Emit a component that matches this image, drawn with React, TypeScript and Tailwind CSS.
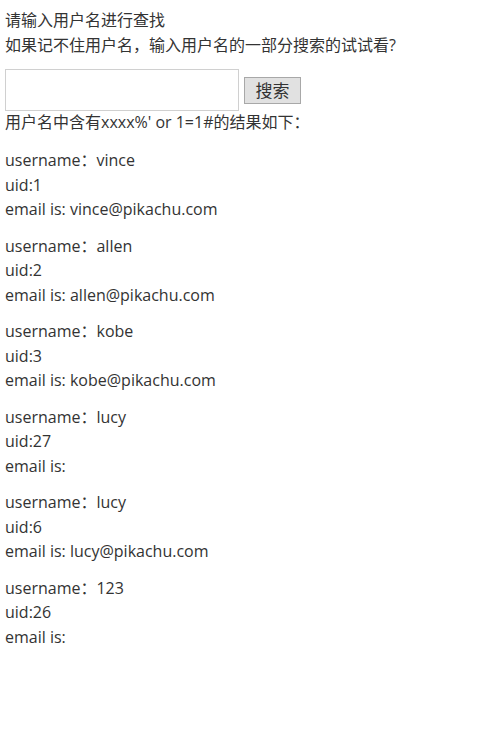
const rows = [
  { name: 'vince', uid: '1', email: 'vince@pikachu.com' },
  { name: 'allen', uid: '2', email: 'allen@pikachu.com' },
  { name: 'kobe', uid: '3', email: 'kobe@pikachu.com' },
  { name: 'lucy', uid: '27', email: '' },
  { name: 'lucy', uid: '6', email: 'lucy@pikachu.com' },
  { name: '123', uid: '26', email: '' },
]

export default function App() {
  return (
    <div
      className="min-h-screen bg-white px-[5px] pt-[8px] text-[16px] leading-[25px] text-[#333]"
      style={{ fontFamily: '"Open Sans", "Noto Sans CJK SC", sans-serif' }}
    >
      <p>请输入用户名进行查找</p>
      <p>如果记不住用户名，输入用户名的一部分搜索的试试看?</p>
      <div className="mt-[11px] flex items-center gap-[5px]">
        <input type="text" className="h-[42px] w-[234px] border border-[#d0d0d0] bg-white outline-none" />
        <button className="mt-[1px] h-[27px] w-[57px] border border-[#a8a8a8] bg-[#e1e1e1] text-[17px] leading-none text-[#333]">
          搜索
        </button>
      </div>
      <p className="-mt-[1px]">用户名中含有xxxx%' or 1=1#的结果如下：</p>
      <div className="mt-[13px]">
        {rows.map((r, i) => (
          <div key={i} className="mb-[12px] leading-[24.5px]">
            <p>username：{r.name}</p>
            <p>uid:{r.uid}</p>
            <p>email is: {r.email}</p>
          </div>
        ))}
      </div>
    </div>
  )
}
